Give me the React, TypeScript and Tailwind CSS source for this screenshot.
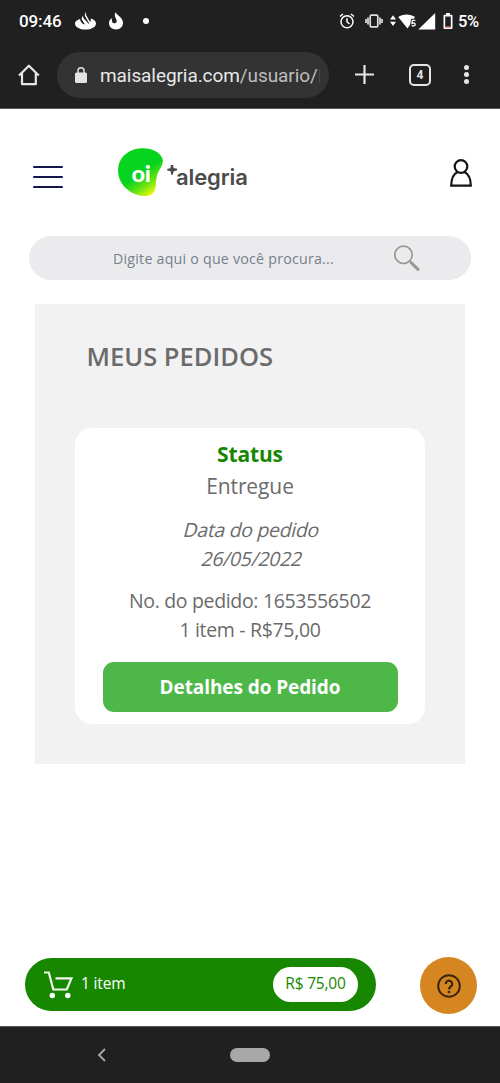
import React from "react";

function StatusBar() {
  return (
    <div className="flex h-[42px] items-center pl-[19px] font-['Roboto',sans-serif] text-white">
      <span className="w-[43px] text-[17px] font-medium leading-[41px] tracking-[-0.1px] whitespace-nowrap">09:46</span>
      <svg className="ml-[13px]" width="21" height="18" viewBox="0 0 21 18" fill="#fff">
        <path d="M5.200 6.900C2.200 7.800 0 9.400 0 11.400 0 14.800 4.500 17.500 10.500 17.500S21 14.800 21 11.400c0-2.100-2.100-3.900-5.200-4.800.2 1.300-.1 2.500-.7 3.400L11.400 3.500C10.800 2.400 10.800 1.200 11.300 0 9.800 1.300 9.400 3 10.200 4.500l3.600 6.200c.3.500.4 1 .4 1.500L8.500 6.300C8 5.500 7.900 4.600 8.200 3.700 6.700 4.900 6.300 6.500 7.100 7.900l2.900 4.600C7.500 12 5 9.500 5.200 6.900z" />
      </svg>
      <svg className="ml-[13px]" width="14" height="18" viewBox="0 0 14 18" fill="#fff">
        <path fillRule="evenodd" d="M6.600 0c0 3 7.400 4.500 7.400 10.800 0 4-3 6.700-7 6.700s-7-2.600-7-6.200C0 8.800 1.200 7 3.200 6.300 2.500 8.500 2.800 10.700 4.700 11.200c2 .5 3.400-1 2.900-3C7.100 6 4.600 4 6.600 0z" />
      </svg>
      <span className="ml-[20px] h-[6px] w-[6px] rounded-full bg-white" />
      <svg className="ml-[190px]" width="16" height="16" viewBox="0 0 16 16" fill="none" stroke="#fff" strokeWidth="1.500">
        <circle cx="8" cy="8.800" r="6" />
        <path d="M8 5.200V9l2.600 2M1 3.500 4 1M15 3.500 12 1" />
      </svg>
      <svg className="ml-[10px]" width="18" height="14" viewBox="0 0 18 14" fill="none" stroke="#ddd" strokeWidth="1.700">
        <rect x="5.200" y="1.200" width="7.600" height="11.600" rx="1" />
        <path d="M3 3.500v7M15 3.500v7M1 5v4M17 5v4" />
      </svg>
      <svg className="ml-[7px]" width="46" height="18" viewBox="0 0 46 18" fill="#fff">
        <path d="M0 7.500 3 3.200l3 4.300zM0 9.800h6L3 14z" />
        <path d="M8.200 5C12.500 1.500 20.500 1.500 25 5l-7.500 11.500z" />
        <path d="M45.200 1V17.500H28.300z" />
        <path d="M25.300 8.300h-3l-.3 3c2-.7 3.200 0 3.200 1.200 0 1.400-1.800 1.900-3.500.9" fill="none" stroke="#202020" strokeWidth="3" />
        <path d="M25.300 8.300h-3l-.3 3c2-.7 3.200 0 3.200 1.200 0 1.400-1.800 1.900-3.500.9" fill="none" stroke="#fff" strokeWidth="1.300" />
      </svg>
      <svg className="ml-[7px]" width="10" height="16" viewBox="0 0 10 16">
        <path fill="#fff" fillRule="evenodd" d="M3 0h4v1.800h1.500a1 1 0 0 1 1 1V15a1 1 0 0 1-1 1h-7a1 1 0 0 1-1-1V2.800a1 1 0 0 1 1-1H3zM2.200 3.600v10.600h5.600V3.600z" />
        <path fill="#e06a50" d="M2.200 13.300h5.600v1.200H2.200z" />
      </svg>
      <span className="ml-[5px] pt-px text-[16.500px] font-medium leading-[41px] tracking-[-0.300px] whitespace-nowrap">5%</span>
    </div>
  );
}

function BrowserBar() {
  return (
    <div className="flex h-[67px] items-center border-b border-[#5b5657] pb-[1px] pl-[18px]">
      <svg width="22" height="22" viewBox="0 0 22 22" fill="none" stroke="#e6e6e6" strokeWidth="2.200">
        <path d="M1 11.500 10.900 1.700l9.900 9.800M4 9.300v10.900h13.800V9.300" strokeLinejoin="round" />
      </svg>
      <div className="ml-[17px] flex h-[46px] w-[272px] items-center rounded-full bg-[#333333] pl-[18px]">
        <svg width="12" height="16" viewBox="0 0 12 16">
          <rect y="5.500" width="12" height="10.500" rx="1.500" fill="#e4e4e4" />
          <path d="M3 6V3.800a3 3 0 0 1 6 0V6" fill="none" stroke="#e4e4e4" strokeWidth="1.500" />
        </svg>
        <div className="ml-[13px] flex items-center whitespace-nowrap pt-[2px] font-['Roboto',sans-serif] text-[19px] leading-[28px] tracking-[-0.080px] text-[#e8e8e8]">
          <span>maisalegria.com</span>
          <span className="text-[#bdbdbd]">/usuario/</span>
          <span className="ml-px h-[14px] w-px bg-[#4a4a4a]" />
        </div>
      </div>
      <svg className="ml-[26px]" width="19" height="19" viewBox="0 0 19 19" stroke="#e6e6e6" strokeWidth="2.200">
        <path d="M9.500 0v19M0 9.500h19" />
      </svg>
      <div className="ml-[35px] flex h-[22px] w-[22px] items-center justify-center rounded-[5px] border-2 border-[#e6e6e6] font-['Roboto',sans-serif] text-[12px] font-bold leading-none text-[#e6e6e6]">4</div>
      <div className="ml-[33px] flex flex-col gap-[2px]">
        <span className="h-[5px] w-[5px] rounded-full bg-[#e6e6e6]" />
        <span className="h-[5px] w-[5px] rounded-full bg-[#e6e6e6]" />
        <span className="h-[5px] w-[5px] rounded-full bg-[#e6e6e6]" />
      </div>
    </div>
  );
}

function Logo() {
  return (
    <div className="ml-[55px] flex h-[49px] items-start">
      <div className="relative h-[49px] w-[45px]">
        <svg width="45" height="49" viewBox="0 0 45 49">
          <defs>
            <linearGradient id="leaf" gradientUnits="userSpaceOnUse" x1="17" y1="20" x2="35" y2="46">
              <stop offset="0.250" stopColor="#06d41e" />
              <stop offset="0.650" stopColor="#6be512" />
              <stop offset="1" stopColor="#f0fa05" />
            </linearGradient>
          </defs>
          <path fill="url(#leaf)" d="M23 .3C33.500-.5 43.500 4.500 44.800 11.800 45.500 17.500 40.500 21.500 39 27.500c-1.200 5-.6 8.500-1.900 13.500C35.600 46.500 31 48.500 25.500 48 11 46.500 0 35.500.1 22.500.2 10 9.500 1.300 23 .3z" />
        </svg>
        <span className="absolute left-[13.500px] top-[13px] font-['Lato',sans-serif] text-[23.500px] font-black leading-[24px] tracking-[-0.300px] text-white">oi</span>
      </div>
      <svg className="ml-[4px] mt-[17px]" width="11" height="10" viewBox="0 0 11 10" fill="#4b4b4b">
        <path d="M3.700 0h2.400l.5 3L10 3.800v1.700l-3.300.7-1 3.600H4.200l-.5-3.500L.3 5.500V3.800l3.300-.5z" />
      </svg>
      <span className="-ml-[2px] mt-[15px] font-['Inter',sans-serif] text-[22px] font-semibold leading-[28px] tracking-[-0.100px] text-[#4b4b4b]">alegria</span>
    </div>
  );
}

function SiteHeader() {
  return (
    <header className="flex h-[127px] items-start pl-[33px] pt-[39px]">
      <div className="mt-[18px] flex w-[30px] flex-col gap-[8px]">
        <span className="h-[2px] rounded bg-[#14144e]" />
        <span className="h-[2px] rounded bg-[#14144e]" />
        <span className="h-[2px] rounded bg-[#14144e]" />
      </div>
      <Logo />
      <svg className="ml-auto mr-[28px] mt-[11px]" width="22" height="28" viewBox="0 0 22 28" fill="none" stroke="#151515" strokeWidth="2.200">
        <circle cx="11" cy="7.500" r="6.300" />
        <path d="M7.600 13C3.500 15 1.200 19 1.200 26.600h19.600C20.800 19 18.500 15 14.400 13" />
      </svg>
    </header>
  );
}

function SearchBox() {
  return (
    <div className="mx-[29px] flex h-[44px] items-center rounded-full bg-[#ebebed] pl-[84px]">
      <span className="w-[281px] whitespace-nowrap pt-px text-[14.200px] leading-[20px] tracking-[0.240px] text-[#75808a]">Digite aqui o que você procura...</span>
      <svg width="26" height="26" viewBox="0 0 26 26" fill="none" stroke="#999">
        <circle cx="9.500" cy="9.800" r="8.700" strokeWidth="1.700" />
        <path d="m15.800 16.200 2 2" strokeWidth="1.700" />
        <path d="m17.300 17.800 6.700 6.500" strokeWidth="3" strokeLinecap="round" />
      </svg>
    </div>
  );
}

function Orders() {
  return (
    <main className="mx-[35px] mt-[24px] h-[460px] bg-[#f2f2f2] px-[40px] pt-[34px]">
      <h1 className="ml-[11.500px] whitespace-nowrap text-[25.500px] font-semibold leading-[36px] text-[#6b6b6b]">MEUS PEDIDOS</h1>
      <section className="mt-[54px] flex h-[296px] flex-col items-center rounded-[17px] bg-white pt-[10px] text-[19.500px] leading-[28.500px] tracking-[-0.330px] text-[#6b6b6b]">
        <h2 className="text-[21px] font-bold leading-[32px] tracking-[-0.150px] text-[#178700]">Status</h2>
        <p className="text-[21px] leading-[32px] tracking-[-0.100px]">Entregue</p>
        <p className="mt-[14px] -skew-x-[14deg] pl-[4px]">Data do pedido</p>
        <p className="-skew-x-[14deg] pl-[4px]">26/05/2022</p>
        <p className="mt-[14px] whitespace-nowrap">No. do pedido: 1653556502</p>
        <p>1 item - R$75,00</p>
        <button className="mt-[18px] h-[50px] w-[295px] rounded-[11px] bg-[#4db848] pt-[1px] text-[19px] font-bold tracking-[-0.080px] text-white">Detalhes do Pedido</button>
      </section>
    </main>
  );
}

function CartBar() {
  return (
    <div className="mt-auto flex items-start pb-[12px] pl-[25px]">
      <div className="mt-px flex h-[53px] w-[351px] items-center rounded-full bg-[#178700] pl-[18px] text-[16px] leading-[24px]">
        <svg width="31" height="29" viewBox="0 0 31 29" fill="none" stroke="#f0f5ee">
          <path d="M1 2.500h4.800l4.500 17h13.500l4.700-11.200H12.500" strokeWidth="2.200" />
          <circle cx="9.300" cy="25.500" r="2.700" fill="#fff" stroke="none" />
          <circle cx="24.800" cy="25.500" r="2.700" fill="#fff" stroke="none" />
        </svg>
        <span className="ml-[7px] pb-[4px] text-[15.500px] tracking-[-0.150px] text-white">1 item</span>
        <span className="ml-auto mr-[18px] flex h-[35px] w-[85px] items-center justify-center whitespace-nowrap rounded-full bg-white pb-[4px] text-[15.500px] tracking-[-0.200px] text-[#178700]">R$ 75,00</span>
      </div>
      <button className="ml-[44px] flex h-[57px] w-[57px] items-center justify-center rounded-full bg-[#d58621]">
        <svg width="24" height="24" viewBox="0 0 24 24" fill="none" stroke="#3a260d" strokeWidth="2">
          <circle cx="12" cy="12" r="10.800" />
          <path d="M8.800 10a3.200 3.200 0 1 1 5 2.500c-1.200.9-1.800 1.400-1.800 3" strokeWidth="2.200" />
          <path d="M12 17v2.200" strokeWidth="2.400" />
        </svg>
      </button>
    </div>
  );
}

export default function App() {
  return (
    <div className="flex h-[1083px] w-[500px] flex-col overflow-hidden bg-white font-['Open_Sans',sans-serif]">
      <div className="bg-[#202020]">
        <StatusBar />
        <BrowserBar />
      </div>
      <SiteHeader />
      <SearchBox />
      <Orders />
      <CartBar />
      <nav className="flex h-[57px] items-center border-t border-[#555] bg-[#202020] pl-[97px]">
        <svg width="9" height="14" viewBox="0 0 9 14" fill="none" stroke="#aaa" strokeWidth="1.800">
          <path d="M8 1 2 7l6 6" />
        </svg>
        <span className="ml-[124px] h-[14px] w-[40px] rounded-full bg-[#a8a8a8]" />
      </nav>
    </div>
  );
}
